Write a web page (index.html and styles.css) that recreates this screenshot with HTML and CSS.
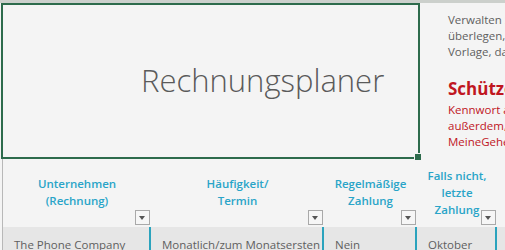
FILE: index.html
```html
<!DOCTYPE html>
<html lang="de">
<head>
  <meta charset="UTF-8">
  <meta name="viewport" content="width=device-width, initial-scale=1.0">
  <title>Rechnungsplaner</title>
  <link rel="stylesheet" href="styles.css">
</head>
<body>
  <div class="sheet">
    <div class="top-strip"></div>

    <div class="upper">
      <div class="title-box">
        <h1>Rechnungsplaner</h1>
        <span class="handle"></span>
      </div>
      <div class="info">
        <p class="info-text">Verwalten Sie Ihre Rechnungen, ohne lange zu</p>
        <p class="info-text">überlegen, wann welche Zahlung fällig ist. Mit dieser</p>
        <p class="info-text">Vorlage, das Blatt ausfüllen und fertig.</p>
        <h2 class="warn-title">Schützen Sie diese Arbeitsmappe</h2>
        <p class="warn-text">Kennwort auf dem Blatt festlegen und</p>
        <p class="warn-text">außerdem, die Datei benennen, etwa</p>
        <p class="warn-text">MeineGeheimenRechnungen.xlsx</p>
      </div>
    </div>

    <div class="table">
      <div class="head-row">
        <div class="head-cell">
          <span class="head-label">Unternehmen<br>(Rechnung)</span>
          <span class="filter"></span>
        </div>
        <div class="head-cell">
          <span class="head-label">Häufigkeit/<br>Termin</span>
          <span class="filter"></span>
        </div>
        <div class="head-cell">
          <span class="head-label">Regelmäßige<br>Zahlung</span>
          <span class="filter"></span>
        </div>
        <div class="head-cell">
          <span class="head-label">Falls nicht,<br>letzte<br>Zahlung</span>
          <span class="filter"></span>
        </div>
        <div class="head-cell last"></div>
      </div>
      <div class="data-row">
        <div class="data-cell">The Phone Company</div>
        <div class="data-cell">Monatlich/zum Monatsersten</div>
        <div class="data-cell">Nein</div>
        <div class="data-cell">Oktober</div>
        <div class="data-cell last"></div>
      </div>
    </div>
  </div>
</body>
</html>
```

FILE: styles.css
```css
body {
  margin: 0;
  background: #f4f4f4;
  font-family: 'Open Sans', 'Noto Sans', sans-serif;
  overflow: hidden;
}

.sheet {
  width: 505px;
  height: 250px;
  overflow: hidden;
}

.top-strip {
  height: 3px;
  background: #ccd0cc;
}

.upper {
  display: flex;
  height: 156px;
  padding-left: 1px;
}

.title-box {
  position: relative;
  flex: 0 0 auto;
  width: 415px;
  height: 152px;
  border: 2px solid #2d6b4c;
  display: flex;
  align-items: center;
}

.title-box h1 {
  margin: 0 0 2px 138px;
  font-size: 31px;
  line-height: 33px;
  font-weight: 300;
  color: #5a5a5a;
  white-space: nowrap;
}

.handle {
  position: absolute;
  right: -4px;
  bottom: -4px;
  width: 6px;
  height: 6px;
  background: #2d6b4c;
  border: 1px solid #f4f4f4;
}

.info {
  padding: 9px 0 0 28px;
  white-space: nowrap;
  overflow: hidden;
}

.info p {
  margin: 0;
  font-size: 11.5px;
  line-height: 16px;
}

.info-text {
  color: #5f5f5f;
}

.warn-title {
  margin: 18px 0 2px;
  font-size: 17px;
  line-height: 22px;
  font-weight: 700;
  color: #c0161f;
}

.warn-text {
  color: #c0161f;
  line-height: 16.5px;
}

.table {
  margin-left: 2px;
  border-left: 1px solid #b8b8b8;
}

.head-row,
.data-row {
  display: grid;
  grid-template-columns: 148px 173px 93px 80px 1fr;
}

.head-row {
  height: 68px;
}

.head-cell {
  position: relative;
  display: flex;
  align-items: center;
  justify-content: center;
  text-align: center;
}

.head-label {
  font-size: 11.5px;
  line-height: 17px;
  font-weight: 600;
  color: #29a4c8;
  margin-bottom: 2px;
}

.filter {
  position: absolute;
  right: 1px;
  bottom: 2px;
  width: 13px;
  height: 13px;
  border: 1px solid #a9a9a9;
  background: #f6f6f6;
}

.filter::after {
  content: '';
  position: absolute;
  left: 3px;
  top: 5px;
  border-left: 3.5px solid transparent;
  border-right: 3.5px solid transparent;
  border-top: 4px solid #555;
}

.data-row {
  background: #e6e6e6;
  height: 30px;
}

.data-cell {
  padding: 9px 0 0 11px;
  font-size: 11.5px;
  line-height: 17px;
  color: #5f5f5f;
  white-space: nowrap;
  overflow: hidden;
  border-right: 2px solid #2ba3bd;
}

.data-cell.last {
  border-right: none;
}
```
